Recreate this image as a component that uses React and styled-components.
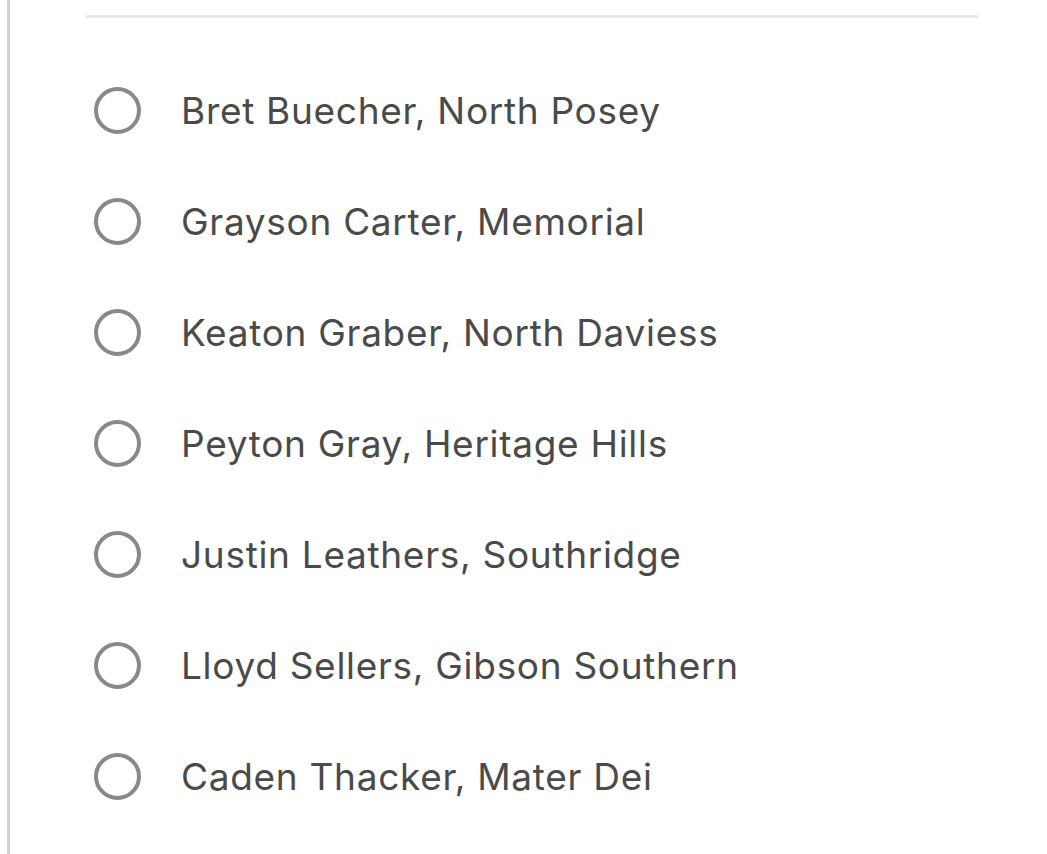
import React from "react";
import styled, { createGlobalStyle } from "styled-components";

const Global = createGlobalStyle`
  html, body { margin: 0; padding: 0; background: #ffffff; }
  body { font-family: Inter, "Liberation Sans", Arial, sans-serif; }
`;

const Page = styled.div`
  margin-left: 7px;
  min-height: 854px;
  border-left: 3px solid #d1d1d1;
  box-sizing: border-box;
  padding-left: 75px;
  padding-top: 15px;
`;

const Divider = styled.div`
  width: 894px;
  height: 3px;
  background: #e9e9e9;
  border-radius: 2px;
`;

const List = styled.ul`
  list-style: none;
  margin: 37px 0 0;
  padding: 0;
`;

const Row = styled.li`
  height: 111px;
  display: flex;
  align-items: center;
  gap: 40px;
  padding-left: 9px;
`;

const Radio = styled.span`
  width: 47px;
  height: 47px;
  box-sizing: border-box;
  border: 4px solid #898989;
  border-radius: 50%;
  flex: none;
`;

const Label = styled.span`
  font-size: 37px;
  color: #4a4a4a;
  letter-spacing: 0.7px;
`;

const names = [
  "Bret Buecher, North Posey",
  "Grayson Carter, Memorial",
  "Keaton Graber, North Daviess",
  "Peyton Gray, Heritage Hills",
  "Justin Leathers, Southridge",
  "Lloyd Sellers, Gibson Southern",
  "Caden Thacker, Mater Dei",
];

export default function App() {
  return (
    <>
      <Global />
      <Page>
        <Divider />
        <List>
          {names.map((n) => (
            <Row key={n}>
              <Radio />
              <Label>{n}</Label>
            </Row>
          ))}
        </List>
      </Page>
    </>
  );
}
